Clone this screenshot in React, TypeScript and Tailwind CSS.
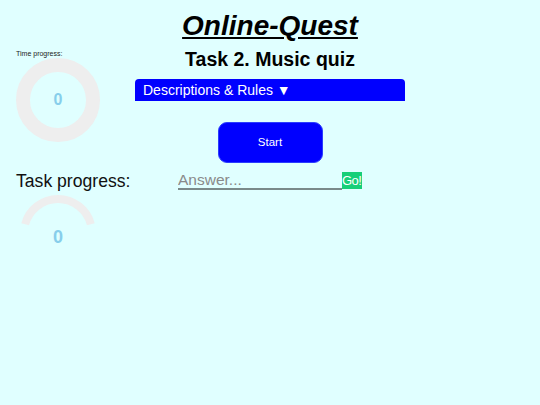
import React from 'react';

function TimeDonut() {
    return (
        <div className="relative w-[84px] h-[84px]">
            <svg width="84" height="84" viewBox="0 0 84 84">
                <circle cx="42" cy="42" r="35" fill="none" stroke="#eeeeee" strokeWidth="14" />
            </svg>
            <div className="absolute inset-0 flex items-center justify-center text-[16px] font-bold text-[#87ceeb]">
                0
            </div>
        </div>
    );
}

function TaskArc() {
    return (
        <div className="flex flex-col items-center w-[84px]">
            <svg width="84" height="36" viewBox="0 0 84 36" className="block">
                <path
                    d="M 9.16 33.2 A 34 34 0 0 1 74.84 33.2"
                    fill="none"
                    stroke="#eeeeee"
                    strokeWidth="8"
                />
            </svg>
            <div className="text-[18px] leading-[20px] font-bold text-[#87ceeb]">0</div>
        </div>
    );
}

export default function App() {
    return (
        <div className="min-h-screen bg-[#e0ffff] font-['Liberation_Sans',Arial,sans-serif] text-black">
            <h1 className="pt-[10px] text-center text-[28px] leading-[32px] font-bold italic underline">
                Online-Quest
            </h1>

            <div className="grid grid-cols-[135px_270px_1fr] mt-[6px]">
                <div className="pl-[16px] pt-[2px]">
                    <div className="text-[7px] leading-[8px] text-[#222]">Time progress:</div>
                    <TimeDonut />
                    <div className="mt-[29px] text-[17.6px] leading-[20px] text-[#111] whitespace-nowrap">
                        Task progress:
                    </div>
                    <TaskArc />
                </div>

                <div className="flex flex-col items-center">
                    <h3 className="text-[19.5px] leading-[22px] font-bold">Task 2. Music quiz</h3>

                    <div className="mt-[9px] w-full h-[22px] bg-[#0000ff] rounded-t-[4px] pl-[8px] text-white text-[14px] leading-[22px]">
                        Descriptions &amp; Rules ▼
                    </div>

                    <button className="mt-[21px] w-[105px] h-[41px] rounded-[9px] bg-[#0000ff] text-white text-[11.5px] border border-[#2a3cff]">
                        Start
                    </button>

                    <div className="mt-[9px] flex items-start">
                        <input
                            type="text"
                            placeholder="Answer..."
                            className="w-[164px] h-[18px] bg-transparent border-b-2 border-[#7a8a8a] text-[15.5px] leading-[16px] outline-none placeholder:text-[#8a8a8a] p-0"
                        />
                        <button className="w-[20px] h-[17px] bg-[#17cf78] text-white text-[13px] leading-[17px] overflow-hidden whitespace-nowrap tracking-[-0.5px] text-left">
                            Go!
                        </button>
                    </div>
                </div>

                <div />
            </div>
        </div>
    );
}
